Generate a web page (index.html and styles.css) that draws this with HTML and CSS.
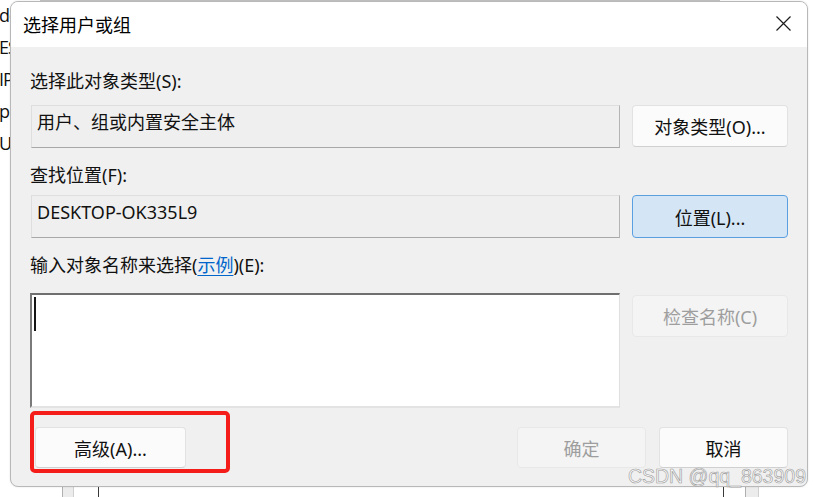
FILE: index.html
```html
<!DOCTYPE html>
<html lang="zh-CN">
<head>
<meta charset="utf-8">
<title>选择用户或组</title>
<link rel="stylesheet" href="styles.css">
</head>
<body>
  <div class="backwin">
    <div class="bg-top"></div>
    <div class="bg-list">
      <div>do</div>
      <div>ES</div>
      <div>IP</div>
      <div>pr</div>
      <div>U</div>
    </div>
    <div class="bg-col bg-col-a"></div>
    <div class="bg-line bg-line-a"></div>
    <div class="bg-corner"></div>
    <div class="bg-col bg-col-b"></div>
  </div>

  <div class="dialog">
    <div class="titlebar">
      <span class="title">选择用户或组</span>
      <svg class="close" width="15" height="15" viewBox="0 0 15 15">
        <path d="M0.5 0.5 L14.5 14.5 M14.5 0.5 L0.5 14.5" stroke="#1b1b1b" stroke-width="1.2" fill="none"/>
      </svg>
    </div>
    <div class="content">
      <div class="label l1">选择此对象类型(S):</div>
      <div class="row r1">
        <div class="field">用户、组或内置安全主体</div>
        <div class="btn">对象类型(O)...</div>
      </div>
      <div class="label l2">查找位置(F):</div>
      <div class="row r2">
        <div class="field">DESKTOP-OK335L9</div>
        <div class="btn focus">位置(L)...</div>
      </div>
      <div class="label l3">输入对象名称来选择(<span class="link">示例</span>)(E):</div>
      <div class="row r3">
        <div class="textarea"><span class="caret"></span></div>
        <div class="btn disabled">检查名称(C)</div>
      </div>
      <div class="footer">
        <div class="btn adv">高级(A)...</div>
        <div class="footer-right">
          <div class="btn disabled small">确定</div>
          <div class="btn small">取消</div>
        </div>
      </div>
    </div>
  </div>

  <div class="annot"></div>
  <div class="watermark">CSDN @qq_863909</div>
</body>
</html>
```

FILE: styles.css
```css
html, body {
  margin: 0;
  padding: 0;
}
body {
  width: 819px;
  height: 497px;
  overflow: hidden;
  position: relative;
  background: #ffffff;
  font-family: "Noto Sans", "Noto Sans CJK SC", sans-serif;
  color: #111;
}

/* window behind the dialog */
.backwin {
  position: absolute;
  inset: 0;
}
.bg-top {
  position: absolute;
  left: 40px;
  top: 0;
  width: 680px;
  height: 1px;
  background: #c4c4c4;
}
.bg-list {
  position: absolute;
  left: -1px;
  top: -1px;
  font-family: "Open Sans", "Noto Sans", sans-serif;
  font-size: 18px;
  line-height: 32px;
  letter-spacing: -1px;
  color: #111;
}
.bg-col {
  position: absolute;
  top: 486px;
  height: 11px;
  background: #ececec;
  border-left: 1px solid #b0b0b0;
  border-right: 1px solid #d0d0d0;
}
.bg-col-a { left: 62px; width: 10px; }
.bg-col-b { left: 745px; width: 12px; }
.bg-line {
  position: absolute;
  top: 486px;
  height: 11px;
  width: 1px;
  background: #3a3a3a;
}
.bg-line-a { left: 98px; }
.bg-corner {
  position: absolute;
  left: 723px;
  top: 486px;
  width: 10px;
  height: 11px;
  border-left: 1px solid #3a3a3a;
  border-top: 1px solid #3a3a3a;
}

/* dialog window */
.dialog {
  position: absolute;
  left: 10px;
  top: 1px;
  width: 798px;
  height: 486px;
  box-sizing: border-box;
  border: 1px solid #b8b8b8;
  border-radius: 8px;
  background: #f0f0f0;
  overflow: hidden;
  box-shadow: 0 0 2px rgba(0, 0, 0, 0.12);
}
.titlebar {
  height: 45px;
  background: #ffffff;
  display: flex;
  align-items: center;
  justify-content: space-between;
  padding: 0 16px 0 12px;
}
.title {
  font-size: 18px;
  line-height: 24px;
  color: #000;
}
.close {
  display: block;
  margin-top: -2px;
}

.content {
  padding: 22px 19px 0 20px;
}
.label {
  font-size: 18px;
  line-height: 24px;
  height: 24px;
  margin-left: -1px;
  white-space: nowrap;
}
.l2 { margin-top: 15px; }
.l3 { margin-top: 15px; }
.link {
  color: #0066cc;
  text-decoration: underline;
  text-underline-offset: 3px;
}

.row {
  display: grid;
  grid-template-columns: 589px 156px;
  column-gap: 12px;
  align-items: start;
}
.r1 { margin-top: 12px; }
.r2 { margin-top: 8px; }
.r3 { margin-top: 16px; }

.field {
  box-sizing: border-box;
  height: 43px;
  padding: 4px 6px 0 5px;
  font-size: 18px;
  line-height: 24px;
  background: #efefef;
  border-top: 1px solid #dedede;
  border-left: 1px solid #dedede;
  border-right: 1px solid #b4b4b4;
  border-bottom: 1px solid #a8a8a8;
  white-space: nowrap;
}

.btn {
  box-sizing: border-box;
  height: 42px;
  display: flex;
  align-items: center;
  justify-content: center;
  font-size: 18px;
  line-height: 24px;
  padding-top: 2px;
  background: #fbfbfb;
  border: 1px solid #e2e2e2;
  border-bottom-color: #d0d0d0;
  border-radius: 4px;
  white-space: nowrap;
}
.r2 .btn { height: 43px; }
.btn.focus {
  background: #d4e5f5;
  border: 1px solid #5a9fe0;
}
.btn.disabled {
  background: #f4f4f4;
  border: 1px solid #e8e8e8;
  color: #9e9e9e;
}
.r3 .btn { margin-top: 2px; }

.textarea {
  position: relative;
  box-sizing: border-box;
  height: 115px;
  background: #ffffff;
  border-top: 2px solid #6f6f6f;
  border-left: 2px solid #7a7a7a;
  border-right: 1px solid #e0e0e0;
  border-bottom: 2px solid #e3e3e3;
  margin-left: -1px;
}
.caret {
  position: absolute;
  left: 2px;
  top: 2px;
  width: 2px;
  height: 34px;
  background: #151515;
}

.footer {
  margin-top: 19px;
  display: flex;
  justify-content: space-between;
  align-items: start;
}
.btn.adv {
  width: 151px;
  height: 41px;
  margin-left: 4px;
}
.footer-right {
  display: flex;
  gap: 13px;
}
.btn.small {
  width: 129px;
  height: 41px;
}

/* annotation overlay */
.annot {
  position: absolute;
  left: 30px;
  top: 411px;
  width: 200px;
  height: 62px;
  box-sizing: border-box;
  border: 4px solid #f41d1a;
  border-radius: 5px;
}
.watermark {
  position: absolute;
  right: 13px;
  top: 466px;
  font-family: "Liberation Sans", Arial, sans-serif;
  font-size: 19.5px;
  line-height: 20px;
  color: rgba(255, 255, 255, 0.7);
  -webkit-text-stroke: 0.6px #9a9a9a;
  white-space: nowrap;
}
```
